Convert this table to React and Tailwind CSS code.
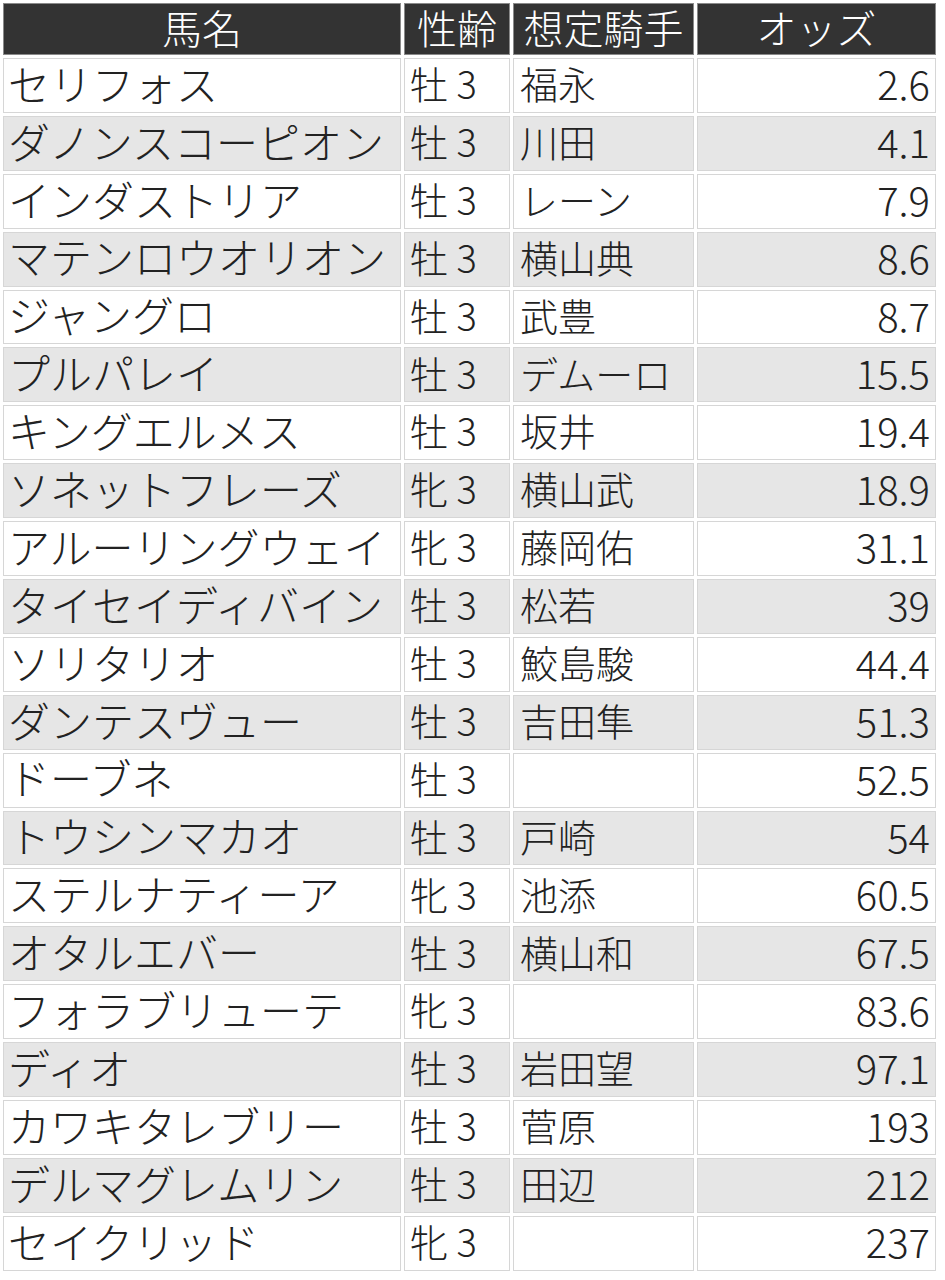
import React from 'react'

const rows = [
  ['セリフォス', '牡 3', '福永', '2.6'],
  ['ダノンスコーピオン', '牡 3', '川田', '4.1'],
  ['インダストリア', '牡 3', 'レーン', '7.9'],
  ['マテンロウオリオン', '牡 3', '横山典', '8.6'],
  ['ジャングロ', '牡 3', '武豊', '8.7'],
  ['プルパレイ', '牡 3', 'デムーロ', '15.5'],
  ['キングエルメス', '牡 3', '坂井', '19.4'],
  ['ソネットフレーズ', '牝 3', '横山武', '18.9'],
  ['アルーリングウェイ', '牝 3', '藤岡佑', '31.1'],
  ['タイセイディバイン', '牡 3', '松若', '39'],
  ['ソリタリオ', '牡 3', '鮫島駿', '44.4'],
  ['ダンテスヴュー', '牡 3', '吉田隼', '51.3'],
  ['ドーブネ', '牡 3', '', '52.5'],
  ['トウシンマカオ', '牡 3', '戸崎', '54'],
  ['ステルナティーア', '牝 3', '池添', '60.5'],
  ['オタルエバー', '牡 3', '横山和', '67.5'],
  ['フォラブリューテ', '牝 3', '', '83.6'],
  ['ディオ', '牡 3', '岩田望', '97.1'],
  ['カワキタレブリー', '牡 3', '菅原', '193'],
  ['デルマグレムリン', '牡 3', '田辺', '212'],
  ['セイクリッド', '牝 3', '', '237'],
]

const headers = ['馬名', '性齢', '想定騎手', 'オッズ']

export default function App() {
  return (
    <div
      className="w-[945px] h-[1280px] bg-white pt-[3px] pl-[3px] font-light"
      style={{ fontFamily: '"Noto Sans CJK JP", "Noto Sans", sans-serif' }}
    >
      <div className="grid grid-cols-[398px_106px_181px_239px] gap-[3px] text-[#222]">
        {headers.map((h) => (
          <div
            key={h}
            className="h-[52px] bg-[#333333] border border-[#8a8a8a] text-white text-[40px] leading-[1.2] flex items-center justify-center pb-[4px]"
          >
            {h}
          </div>
        ))}
        {rows.map((r, i) => {
          const bg = i % 2 === 0 ? 'bg-white' : 'bg-[#e6e6e6]'
          return (
            <React.Fragment key={r[0]}>
              <div className={`h-[54.9px] ${bg} border border-[#d6d6d6] text-[42px] leading-[1.2] flex items-center pl-[4px] pb-[5px] whitespace-nowrap`}>
                {r[0]}
              </div>
              <div className={`h-[54.9px] ${bg} border border-[#d6d6d6] text-[38px] leading-[1.2] flex items-center pl-[5px] pb-[5px] whitespace-nowrap`}>
                {r[1]}
              </div>
              <div className={`h-[54.9px] ${bg} border border-[#d6d6d6] text-[38px] leading-[1.2] flex items-center pl-[6px] pb-[5px] whitespace-nowrap`}>
                {r[2]}
              </div>
              <div className={`h-[54.9px] ${bg} border border-[#d6d6d6] text-[40px] leading-[1.2] flex items-center justify-end pr-[5px] pb-[5px] whitespace-nowrap`}>
                {r[3]}
              </div>
            </React.Fragment>
          )
        })}
      </div>
    </div>
  )
}
